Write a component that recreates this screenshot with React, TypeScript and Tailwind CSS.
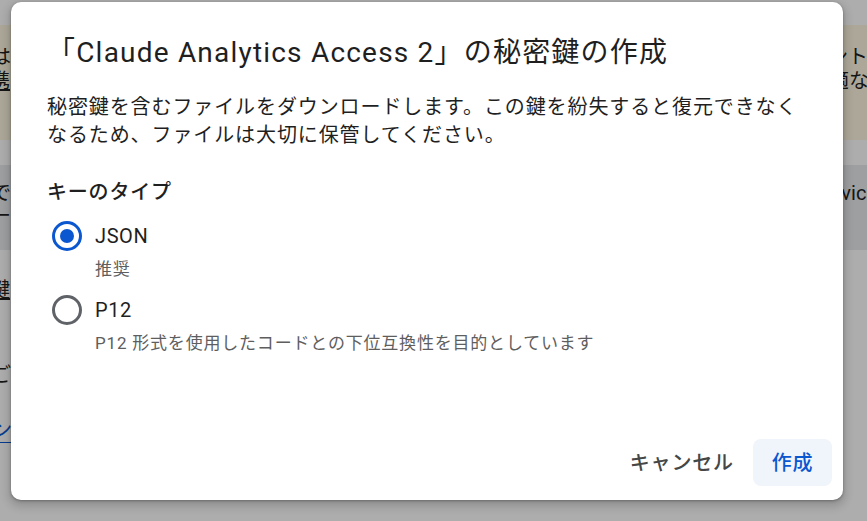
import React from "react";

const Radio: React.FC<{ checked: boolean }> = ({ checked }) => (
  <span
    className={`flex h-[30px] w-[30px] shrink-0 items-center justify-center rounded-full border-[3px] ${
      checked ? "border-[#0b57d0]" : "border-[#5f6368]"
    }`}
  >
    {checked && <span className="h-[14px] w-[14px] rounded-full bg-[#0b57d0]" />}
  </span>
);

const KeyOption: React.FC<{ label: string; hint: string; checked: boolean; top: string }> = ({
  label,
  hint,
  checked,
  top,
}) => (
  <div className={top}>
    <label className="ml-[5px] flex h-[40px] items-center gap-[13px] text-[20px] tracking-[0.6px] text-[#1f1f1f]">
      <Radio checked={checked} />
      <span>{label}</span>
    </label>
    <p className="mt-[1px] pl-[48px] text-[17px] leading-[24px] tracking-[0.8px] text-[#5e5e5e]">{hint}</p>
  </div>
);

export default function App() {
  return (
    <div className="relative h-[521px] w-[867px] overflow-hidden bg-white font-['Roboto','Noto_Sans_CJK_JP',sans-serif] text-[20px] text-[#1f1f1f]">
      {/* page behind the dialog */}
      <div className="pt-[25px]">
        <div className="flex h-[115px] flex-col bg-[#fef7e0] pt-[20px] leading-[24px]">
          <div className="flex justify-between whitespace-nowrap">
            <span className="-ml-[9px]">は、サービス アカウントの</span>
            <span className="-mr-[1px]">ント</span>
          </div>
          <div className="flex justify-between whitespace-nowrap">
            <span className="-ml-[10px] underline">携</span>
            <span className="-mr-[2px]">最適な</span>
          </div>
        </div>
        <div className="mt-[25px] flex h-[85px] flex-col bg-[#e8eaed] pt-[17px] leading-[23px]">
          <div className="flex justify-between whitespace-nowrap">
            <span className="-ml-[9px]">で、</span>
            <span className="-mr-[10px]">Service</span>
          </div>
          <div className="flex whitespace-nowrap">
            <span className="-ml-[9px]">ーー</span>
            <span className="text-[#e37400]">!</span>
          </div>
        </div>
        <div className="pt-[28px] leading-[24px]">
          <div className="-ml-[10px] whitespace-nowrap">
            <span className="underline">鍵</span>
            <span className="text-[#e37400]">·</span>
          </div>
          <div className="-ml-[9px] mt-[61px] whitespace-nowrap">ご.</div>
          <div className="-ml-[8px] mt-[31px] inline-block border-b border-[#0b57d0] text-[#0b57d0]">ン</div>
        </div>
      </div>

      {/* scrim */}
      <div className="absolute inset-0 bg-[rgba(0,0,0,0.32)]" />

      {/* dialog */}
      <div className="absolute left-[11px] top-[2px] flex h-[498px] w-[832px] flex-col rounded-[10px] bg-white shadow-[0_4px_8px_3px_rgba(0,0,0,0.15),0_1px_3px_rgba(0,0,0,0.3)]">
        <div className="pl-[36px] pt-[33px]">
          <h2 className="text-[28px] leading-[36px] tracking-[1.2px] text-[#1f1f1f]">
            「Claude Analytics Access 2」の秘密鍵の作成
          </h2>
          <p className="mt-[22px] w-[770px] text-[20px] leading-[28px] tracking-[0.9px] text-[#1f1f1f]">
            秘密鍵を含むファイルをダウンロードします。この鍵を紛失すると復元できなくなるため、ファイルは大切に保管してください。
          </p>
          <h3 className="mt-[29px] text-[20px] font-medium leading-[28px] tracking-[0.8px] text-[#1f1f1f]">
            キーのタイプ
          </h3>
          <KeyOption top="mt-[10px]" label="JSON" hint="推奨" checked />
          <KeyOption
            top="mt-[9px]"
            label="P12"
            hint="P12 形式を使用したコードとの下位互換性を目的としています"
            checked={false}
          />
        </div>
        <div className="mt-auto flex justify-end pb-[14px] pr-[11px]">
          <button className="h-[47px] rounded-[8px] px-[19px] text-[20px] font-medium tracking-[0.8px] text-[#444746]">
            キャンセル
          </button>
          <button className="h-[47px] rounded-[8px] bg-[#f0f4fb] px-[19px] text-[20px] font-medium tracking-[0.6px] text-[#0b57d0]">
            作成
          </button>
        </div>
      </div>
    </div>
  );
}
